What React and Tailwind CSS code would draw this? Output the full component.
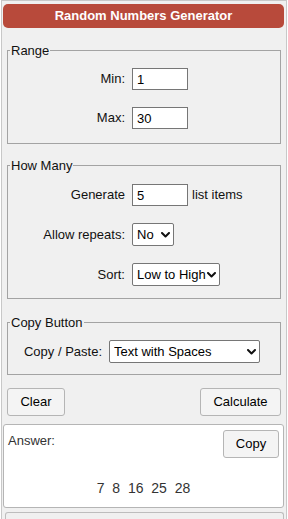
import React from 'react';

const Chevron = ({ className }) => (
    <svg className={className} width="9" height="6" viewBox="0 0 9 6" fill="none">
        <polyline points="1,1 4.5,4.5 8,1" stroke="#111" strokeWidth="2" strokeLinecap="round" strokeLinejoin="round" />
    </svg>
);

const Select = ({ value, options, width }) => (
    <div className={`relative ${width}`}>
        <select
            defaultValue={value}
            className="w-full h-[23px] appearance-none bg-white border border-[#767676] rounded-[2px] pl-[4px] pr-[12px] text-[13px] leading-[21px] text-black outline-none"
        >
            {options.map((o) => (
                <option key={o}>{o}</option>
            ))}
        </select>
        <Chevron className="absolute right-[4px] top-[9px] pointer-events-none" />
    </div>
);

const NumInput = ({ value }) => (
    <input
        type="text"
        defaultValue={value}
        className="w-[56px] h-[22px] bg-white border border-[#767676] pl-[4px] text-[13px] text-black outline-none"
    />
);

const Legend = ({ children }) => (
    <legend className="ml-[2px] px-[1px] text-[13px] leading-[15px] text-[#111]">{children}</legend>
);

const App = () => {
    return (
        <div className="w-[288px] h-[519px] overflow-hidden bg-white font-['Liberation_Sans',Arial,sans-serif] text-[13px] text-[#111]">
            <div className="ml-[1px] w-[286px] min-h-[540px] border border-[#c8c8c8] bg-[#f0f0f0] pt-[3px]">
                <div className="ml-[1px] w-[281px] h-[24px] rounded-[5px] bg-[#b84a3b] text-white font-bold text-[13px] flex items-center justify-center">
                    Random Numbers Generator
                </div>

                {/* Range */}
                <fieldset className="ml-[5px] w-[274px] mt-[15px] border border-[#a3a3a3] pt-[10px] pb-[14px]">
                    <Legend>Range</Legend>
                    <div className="flex items-center">
                        <span className="w-[117px] text-right">Min:</span>
                        <div className="ml-[7px]"><NumInput value="1" /></div>
                    </div>
                    <div className="flex items-center mt-[17px]">
                        <span className="w-[117px] text-right">Max:</span>
                        <div className="ml-[7px]"><NumInput value="30" /></div>
                    </div>
                </fieldset>

                {/* How Many */}
                <fieldset className="ml-[5px] w-[274px] mt-[14px] border border-[#a3a3a3] pt-[11px] pb-[12px]">
                    <Legend>How Many</Legend>
                    <div className="flex items-center">
                        <span className="w-[117px] text-right">Generate</span>
                        <div className="ml-[7px]"><NumInput value="5" /></div>
                        <span className="ml-[4px]">list items</span>
                    </div>
                    <div className="flex items-center mt-[17px]">
                        <span className="w-[117px] text-right">Allow repeats:</span>
                        <div className="ml-[7px]">
                            <Select value="No" options={['No', 'Yes']} width="w-[42px]" />
                        </div>
                    </div>
                    <div className="flex items-center mt-[17px]">
                        <span className="w-[117px] text-right">Sort:</span>
                        <div className="ml-[7px]">
                            <Select value="Low to High" options={['None', 'Low to High', 'High to Low']} width="w-[88px]" />
                        </div>
                    </div>
                </fieldset>

                {/* Copy Button */}
                <fieldset className="ml-[5px] w-[274px] mt-[16px] border border-[#a3a3a3] pt-[10px] pb-[11px]">
                    <Legend>Copy Button</Legend>
                    <div className="flex items-center">
                        <span className="w-[94px] text-right">Copy / Paste:</span>
                        <div className="ml-[7px]">
                            <Select
                                value="Text with Spaces"
                                options={['Text with Spaces', 'Text with Commas', 'One per Line']}
                                width="w-[151px]"
                            />
                        </div>
                    </div>
                </fieldset>

                <div className="ml-[5px] w-[274px] mt-[13px] flex justify-between">
                    <button className="w-[58px] h-[28px] bg-[#f4f4f4] border border-[#b5b5b5] rounded-[3px] text-[13px] text-black">
                        Clear
                    </button>
                    <button className="w-[81px] h-[28px] bg-[#f4f4f4] border border-[#b5b5b5] rounded-[3px] text-[13px] text-black">
                        Calculate
                    </button>
                </div>

                {/* Answer */}
                <div className="ml-[1px] w-[281px] h-[84px] mt-[8px] bg-white border border-[#b5b5b5] rounded-[3px] pl-[4px] pr-[4px] pt-[4px] flex flex-col">
                    <div className="flex justify-between items-start">
                        <span className="mt-[4px] text-[#333] leading-[15px]">Answer:</span>
                        <button className="mt-[1px] w-[56px] h-[28px] bg-[#f4f4f4] border border-[#b5b5b5] rounded-[3px] text-[13px] text-black">
                            Copy
                        </button>
                    </div>
                    <div className="mt-[22px] text-center text-[14px] leading-[16px] text-[#333] whitespace-pre">
                        {'7  8  16  25  28'}
                    </div>
                </div>

                <div className="ml-[3px] w-[279px] h-[20px] mt-[4px] border-t border-l border-r border-[#bdbdbd] rounded-t-[3px]" />
            </div>
        </div>
    );
};

export default App;
